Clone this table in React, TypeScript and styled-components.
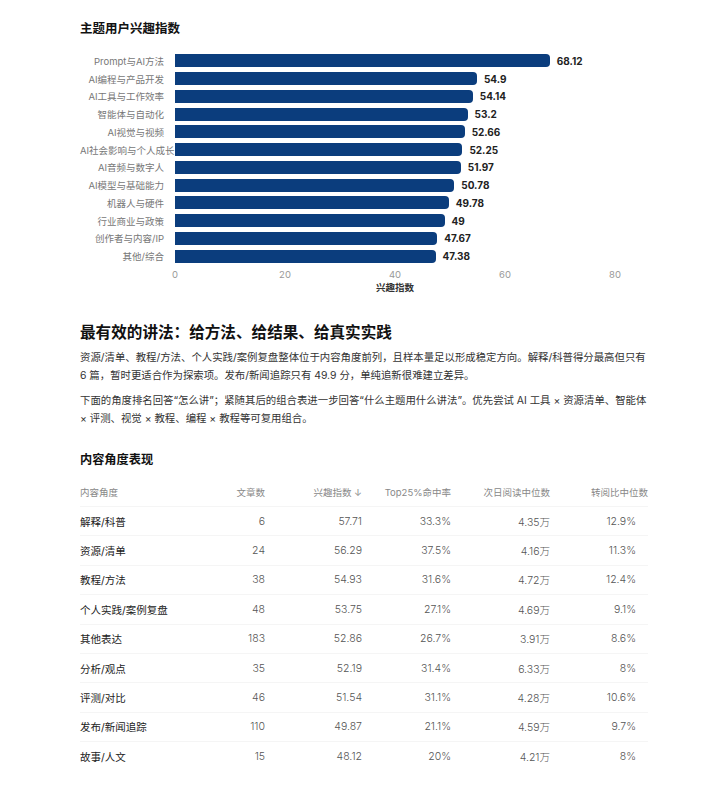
import React from "react";
import styled, { createGlobalStyle } from "styled-components";

const GlobalStyle = createGlobalStyle`
  body {
    margin: 0;
    background: #fff;
    font-family: "Inter", "Noto Sans CJK SC", sans-serif;
    color: #222;
  }
`;

const topics = [
  { name: "Prompt与AI方法", value: 68.12 },
  { name: "AI编程与产品开发", value: 54.9 },
  { name: "AI工具与工作效率", value: 54.14 },
  { name: "智能体与自动化", value: 53.2 },
  { name: "AI视觉与视频", value: 52.66 },
  { name: "AI社会影响与个人成长", value: 52.25 },
  { name: "AI音频与数字人", value: 51.97 },
  { name: "AI模型与基础能力", value: 50.78 },
  { name: "机器人与硬件", value: 49.78 },
  { name: "行业商业与政策", value: 49 },
  { name: "创作者与内容/IP", value: 47.67 },
  { name: "其他/综合", value: 47.38 },
];

const ticks = [0, 20, 40, 60, 80];

const angles = [
  ["解释/科普", "6", "57.71", "33.3%", "4.35万", "12.9%"],
  ["资源/清单", "24", "56.29", "37.5%", "4.16万", "11.3%"],
  ["教程/方法", "38", "54.93", "31.6%", "4.72万", "12.4%"],
  ["个人实践/案例复盘", "48", "53.75", "27.1%", "4.69万", "9.1%"],
  ["其他表达", "183", "52.86", "26.7%", "3.91万", "8.6%"],
  ["分析/观点", "35", "52.19", "31.4%", "6.33万", "8%"],
  ["评测/对比", "46", "51.54", "31.1%", "4.28万", "10.6%"],
  ["发布/新闻追踪", "110", "49.87", "21.1%", "4.59万", "9.7%"],
  ["故事/人文", "15", "48.12", "20%", "4.21万", "8%"],
];

const App = () => {
  return (
    <>
      <GlobalStyle />
      <Page>
        <ChartTitle>主题用户兴趣指数</ChartTitle>
        <Chart>
          {topics.map((t) => (
            <BarRow key={t.name}>
              <BarLabel>{t.name}</BarLabel>
              <Track>
                <Bar style={{ width: `${(t.value / 80) * 100}%` }} />
                <BarValue>{t.value}</BarValue>
              </Track>
            </BarRow>
          ))}
          <AxisRow>
            <AxisSpacer />
            <AxisTicks>
              {ticks.map((n) => (
                <Tick key={n}>
                  <span>{n}</span>
                </Tick>
              ))}
            </AxisTicks>
          </AxisRow>
          <AxisRow>
            <AxisSpacer />
            <AxisTitle>兴趣指数</AxisTitle>
          </AxisRow>
        </Chart>

        <Heading>最有效的讲法：给方法、给结果、给真实实践</Heading>
        <Para>
          资源/清单、教程/方法、个人实践/案例复盘整体位于内容角度前列，且样本量足以形成稳定方向。解释/科普得分最高但只有
          6 篇，暂时更适合作为探索项。发布/新闻追踪只有 49.9 分，单纯追新很难建立差异。
        </Para>
        <Para>
          下面的角度排名回答“怎么讲”；紧随其后的组合表进一步回答“什么主题用什么讲法”。优先尝试 AI 工具 × 资源清单、智能体
          × 评测、视觉 × 教程、编程 × 教程等可复用组合。
        </Para>

        <SectionTitle>内容角度表现</SectionTitle>
        <Table>
          <colgroup>
            <col style={{ width: 105 }} />
            <col style={{ width: 80 }} />
            <col style={{ width: 97 }} />
            <col style={{ width: 89 }} />
            <col style={{ width: 99 }} />
            <col style={{ width: 98 }} />
          </colgroup>
          <thead>
            <tr>
              <Th>内容角度</Th>
              <Th $num>文章数</Th>
              <Th $num>兴趣指数 ↓</Th>
              <Th $num>Top25%命中率</Th>
              <Th $num>次日阅读中位数</Th>
              <Th $num>转阅比中位数</Th>
            </tr>
          </thead>
          <tbody>
            {angles.map((row) => (
              <tr key={row[0]}>
                {row.map((cell, i) => (
                  <Td key={i} $num={i > 0} $last={i === 5}>
                    {cell}
                  </Td>
                ))}
              </tr>
            ))}
          </tbody>
        </Table>
      </Page>
    </>
  );
};

export default App;

const Page = styled.div`
  width: 568px;
  margin-left: 80px;
  padding-top: 21px;
  padding-bottom: 20px;
`;

const ChartTitle = styled.h3`
  margin: 0;
  font-size: 12.5px;
  line-height: 16px;
  font-weight: 700;
  color: #111;
`;

const Chart = styled.div`
  margin-top: 15px;
  display: flex;
  flex-direction: column;
`;

const BarRow = styled.div`
  display: flex;
  align-items: center;
  height: 17.75px;
`;

const BarLabel = styled.div`
  width: 84px;
  margin-right: 11px;
  text-align: right;
  font-size: 9.5px;
  color: #777;
  white-space: nowrap;
`;

const Track = styled.div`
  width: 440px;
  display: flex;
  align-items: center;
`;

const Bar = styled.div`
  height: 13px;
  background: #0b3d7d;
  border-radius: 0 4px 4px 0;
  flex-shrink: 0;
`;

const BarValue = styled.span`
  margin-left: 7px;
  font-size: 10px;
  font-weight: 700;
  color: #222;
  white-space: nowrap;
`;

const AxisRow = styled.div`
  display: flex;
`;

const AxisSpacer = styled.div`
  width: 95px;
  flex-shrink: 0;
`;

const AxisTicks = styled.div`
  width: 440px;
  display: flex;
  justify-content: space-between;
  margin-top: 4px;
`;

const Tick = styled.div`
  width: 0;
  display: flex;
  justify-content: center;
  font-size: 9.5px;
  line-height: 12px;
  color: #999;
  white-space: nowrap;
`;

const AxisTitle = styled.div`
  width: 440px;
  text-align: center;
  font-size: 9.5px;
  line-height: 12px;
  font-weight: 700;
  color: #333;
  margin-top: 1px;
`;

const Heading = styled.h2`
  margin: 28px 0 0;
  font-size: 15.6px;
  line-height: 22px;
  font-weight: 700;
  color: #111;
`;

const Para = styled.p`
  margin: 5px 0 0;
  font-size: 10.4px;
  line-height: 18px;
  color: #333;
  & + & {
    margin-top: 7px;
  }
`;

const SectionTitle = styled.h3`
  margin: 24px 0 0;
  font-size: 12.2px;
  line-height: 16px;
  font-weight: 700;
  color: #111;
`;

const Table = styled.table`
  margin-top: 13px;
  width: 568px;
  table-layout: fixed;
  border-collapse: collapse;
`;

const Th = styled.th<{ $num?: boolean }>`
  padding: 5px 0 6px;
  font-size: 9.5px;
  line-height: 14px;
  font-weight: 400;
  color: #888;
  text-align: ${(p) => (p.$num ? "right" : "left")};
  white-space: nowrap;
  border-bottom: 1px solid #f5f5f5;
`;

const Td = styled.td<{ $num?: boolean; $last?: boolean }>`
  height: 28.4px;
  padding: 0 ${(p) => (p.$last ? "12px" : "0")} 0 0;
  font-size: 10.5px;
  color: ${(p) => (p.$num ? "#555" : "#222")};
  font-weight: ${(p) => (p.$num ? 300 : 400)};
  text-align: ${(p) => (p.$num ? "right" : "left")};
  white-space: nowrap;
  border-bottom: 1px solid #f5f5f5;
  tr:last-child > & {
    border-bottom: none;
  }
`;
